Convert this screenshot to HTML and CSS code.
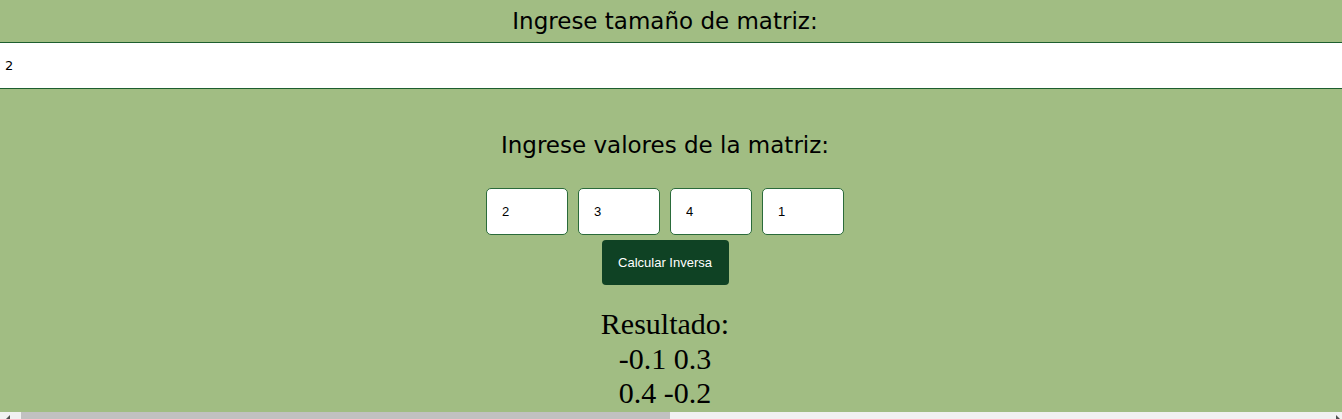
FILE: index.html
```html
<!DOCTYPE html>
<html lang="es">
<head>
<meta charset="utf-8">
<title>Matriz inversa</title>
<link rel="stylesheet" href="styles.css">
</head>
<body>
<div class="app">
  <h2 class="title title-size">Ingrese tamaño de matriz:</h2>
  <input class="size-input" type="text" value="2">
  <h2 class="title title-values">Ingrese valores de la matriz:</h2>
  <div class="cells">
    <input class="cell" type="text" value="2">
    <input class="cell" type="text" value="3">
    <input class="cell" type="text" value="4">
    <input class="cell" type="text" value="1">
  </div>
  <div class="actions">
    <button class="calc-btn" type="button">Calcular Inversa</button>
  </div>
  <div class="result">
    <div>Resultado:</div>
    <div>-0.1 0.3</div>
    <div>0.4 -0.2</div>
  </div>
</div>
<div class="hscroll" aria-hidden="true">
  <span class="hscroll-arrow"><span class="arrow-left"></span></span>
  <span class="hscroll-track"><span class="hscroll-thumb"></span></span>
  <span class="hscroll-arrow hscroll-arrow-end"><span class="arrow-right"></span></span>
</div>
</body>
</html>
```
FILE: styles.css
```css
html {
  overflow: hidden;
}
body {
  margin: 0;
  background: #a1bd83;
  font-family: "DejaVu Sans", sans-serif;
}
.app {
  width: 1330px;
}
.title {
  margin: 0;
  font-weight: normal;
  font-size: 23px;
  line-height: 38px;
  text-align: center;
  color: #000;
}
.title-size {
  padding-top: 2px;
  height: 40px;
}
.size-input {
  display: block;
  box-sizing: border-box;
  width: 1342px;
  height: 47px;
  margin: 0;
  padding: 0 5px;
  border: 0;
  border-top: 1px solid #1d5e2f;
  border-bottom: 1px solid #1d5e2f;
  background: #fff;
  font-family: "DejaVu Sans", sans-serif;
  font-size: 13px;
  color: #000;
  outline: none;
}
.title-values {
  margin-top: 37px;
}
.cells {
  display: flex;
  justify-content: center;
  gap: 10px;
  margin-top: 24px;
}
.cell {
  box-sizing: border-box;
  width: 82px;
  height: 47px;
  margin: 0;
  padding: 0 0 0 15px;
  border: 1px solid #2a6b3a;
  border-radius: 5px;
  background: #fff;
  font-family: "Liberation Sans", Arial, sans-serif;
  font-size: 13px;
  color: #000;
  outline: none;
}
.actions {
  display: flex;
  justify-content: center;
  margin-top: 5px;
}
.calc-btn {
  box-sizing: border-box;
  width: 127px;
  height: 45px;
  padding: 0;
  border: 0;
  border-radius: 4px;
  background: #0f4224;
  color: #fff;
  font-family: "Liberation Sans", Arial, sans-serif;
  font-size: 13px;
  font-weight: 500;
  cursor: pointer;
}
.result {
  margin-top: 22px;
  text-align: center;
  font-family: "Liberation Serif", "Times New Roman", serif;
  font-size: 30px;
  line-height: 34.5px;
  color: #000;
}
.hscroll {
  position: fixed;
  left: 0;
  right: 0;
  bottom: 0;
  height: 7px;
  display: flex;
  background: #f1f1f1;
}
.hscroll-arrow {
  width: 16px;
  flex: none;
  position: relative;
}
.arrow-left,
.arrow-right {
  position: absolute;
  top: 3px;
  width: 0;
  height: 0;
  border-top: 4px solid transparent;
  border-bottom: 4px solid transparent;
}
.arrow-left {
  left: 6px;
  border-right: 4px solid #505050;
}
.arrow-right {
  right: 2px;
  border-left: 4px solid #505050;
}
.hscroll-track {
  flex: 1;
  padding-left: 5px;
}
.hscroll-thumb {
  display: block;
  width: 649px;
  height: 100%;
  background: #c1c1c1;
}
```
